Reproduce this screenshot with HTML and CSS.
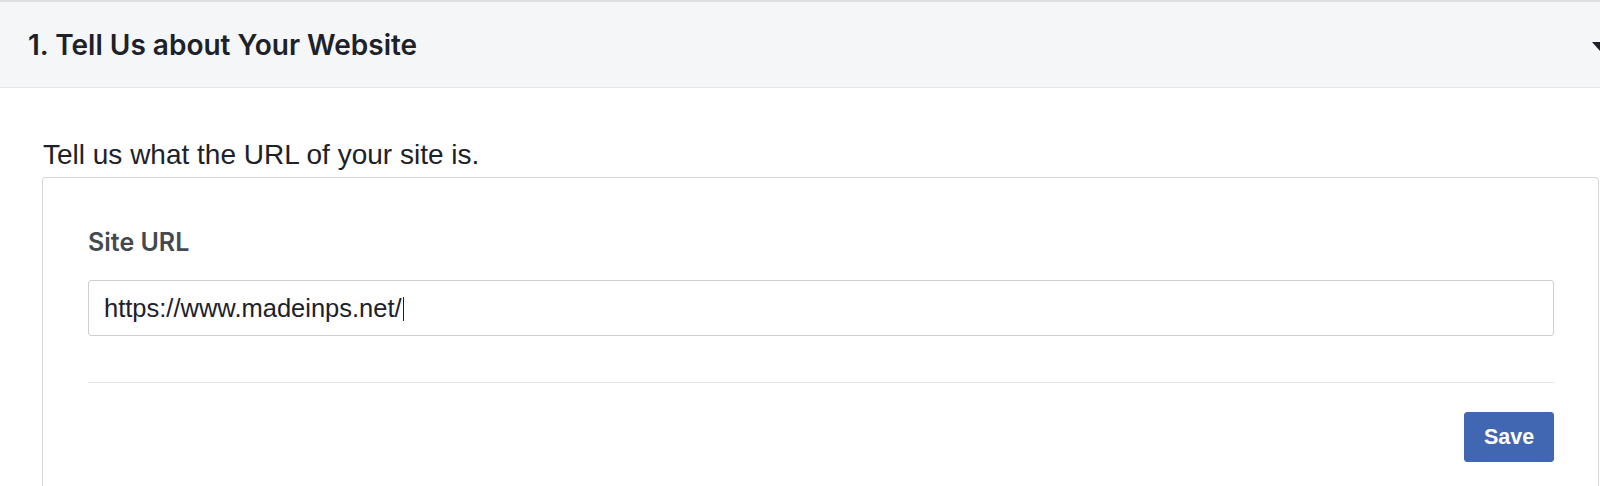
FILE: index.html
```html
<!DOCTYPE html>
<html>
<head>
<meta charset="utf-8">
<link rel="stylesheet" href="styles.css">
</head>
<body>
<div class="section">
  <div class="section-header">
    <h2 class="section-title">1. Tell Us about Your Website</h2>
    <span class="caret"></span>
  </div>
  <div class="section-body">
    <p class="intro">Tell us what the URL of your site is.</p>
    <div class="card">
      <label class="field-label" for="site-url">Site URL</label>
      <div class="input-box"><span class="input-text">https://www.madeinps.net/</span><span class="cursor"></span></div>
      <div class="divider"></div>
      <div class="actions">
        <button class="btn-save">Save</button>
      </div>
    </div>
  </div>
</div>
</body>
</html>
```

FILE: styles.css
```css
html, body {
  margin: 0;
  padding: 0;
  background: #ffffff;
  overflow: hidden;
  height: 486px;
}
body {
  font-family: "Liberation Sans", Arial, sans-serif;
  color: #1d2129;
}
.section {
  height: 486px;
  display: flex;
  flex-direction: column;
}
.section-header {
  border-top: 2px solid #dddfe2;
  border-bottom: 1px solid #e5e6e9;
  background: #f5f6f7;
  height: 85px;
  flex: none;
  display: flex;
  align-items: center;
  justify-content: space-between;
  padding-left: 28px;
}
.section-title {
  margin: 0;
  font-family: Inter, "Liberation Sans", sans-serif;
  font-weight: 600;
  font-size: 28px;
  color: #1d2129;
}
.caret {
  width: 0;
  height: 0;
  border-left: 8px solid transparent;
  border-right: 8px solid transparent;
  border-top: 9px solid #1d2129;
  margin-right: -8px;
  margin-top: 3px;
}
.section-body {
  flex: 1;
  display: flex;
  flex-direction: column;
  padding: 0 1px 0 42px;
  min-height: 0;
}
.intro {
  margin: 51px 0 0 1px;
  font-size: 28px;
  line-height: 32px;
  color: #1d2129;
}
.card {
  flex: 1;
  margin-top: 6px;
  border: 1px solid #d3d6db;
  border-bottom: 0;
  border-radius: 4px 4px 0 0;
  padding: 49px 44px 0 45px;
}
.field-label {
  display: block;
  font-family: Inter, "Liberation Sans", sans-serif;
  font-weight: 600;
  font-size: 25px;
  line-height: 30px;
  color: #444950;
}
.input-box {
  margin-top: 23px;
  height: 54px;
  border: 1px solid #ccd0d5;
  border-radius: 3px;
  display: flex;
  align-items: center;
  padding-left: 15px;
}
.input-text {
  font-size: 25.5px;
  color: #1d2129;
}
.cursor {
  display: inline-block;
  width: 1px;
  height: 24px;
  background: #1d2129;
  margin-left: 1px;
  margin-top: 2px;
}
.divider {
  margin-top: 46px;
  height: 1px;
  background: #e3e5e8;
}
.actions {
  display: flex;
  justify-content: flex-end;
  margin-top: 29px;
}
.btn-save {
  width: 90px;
  height: 50px;
  background: #4267b2;
  border: 1px solid #4267b2;
  border-radius: 3px;
  color: #ffffff;
  font-family: "Liberation Sans", Arial, sans-serif;
  font-weight: 700;
  font-size: 21.5px;
  padding: 0;
}
```
